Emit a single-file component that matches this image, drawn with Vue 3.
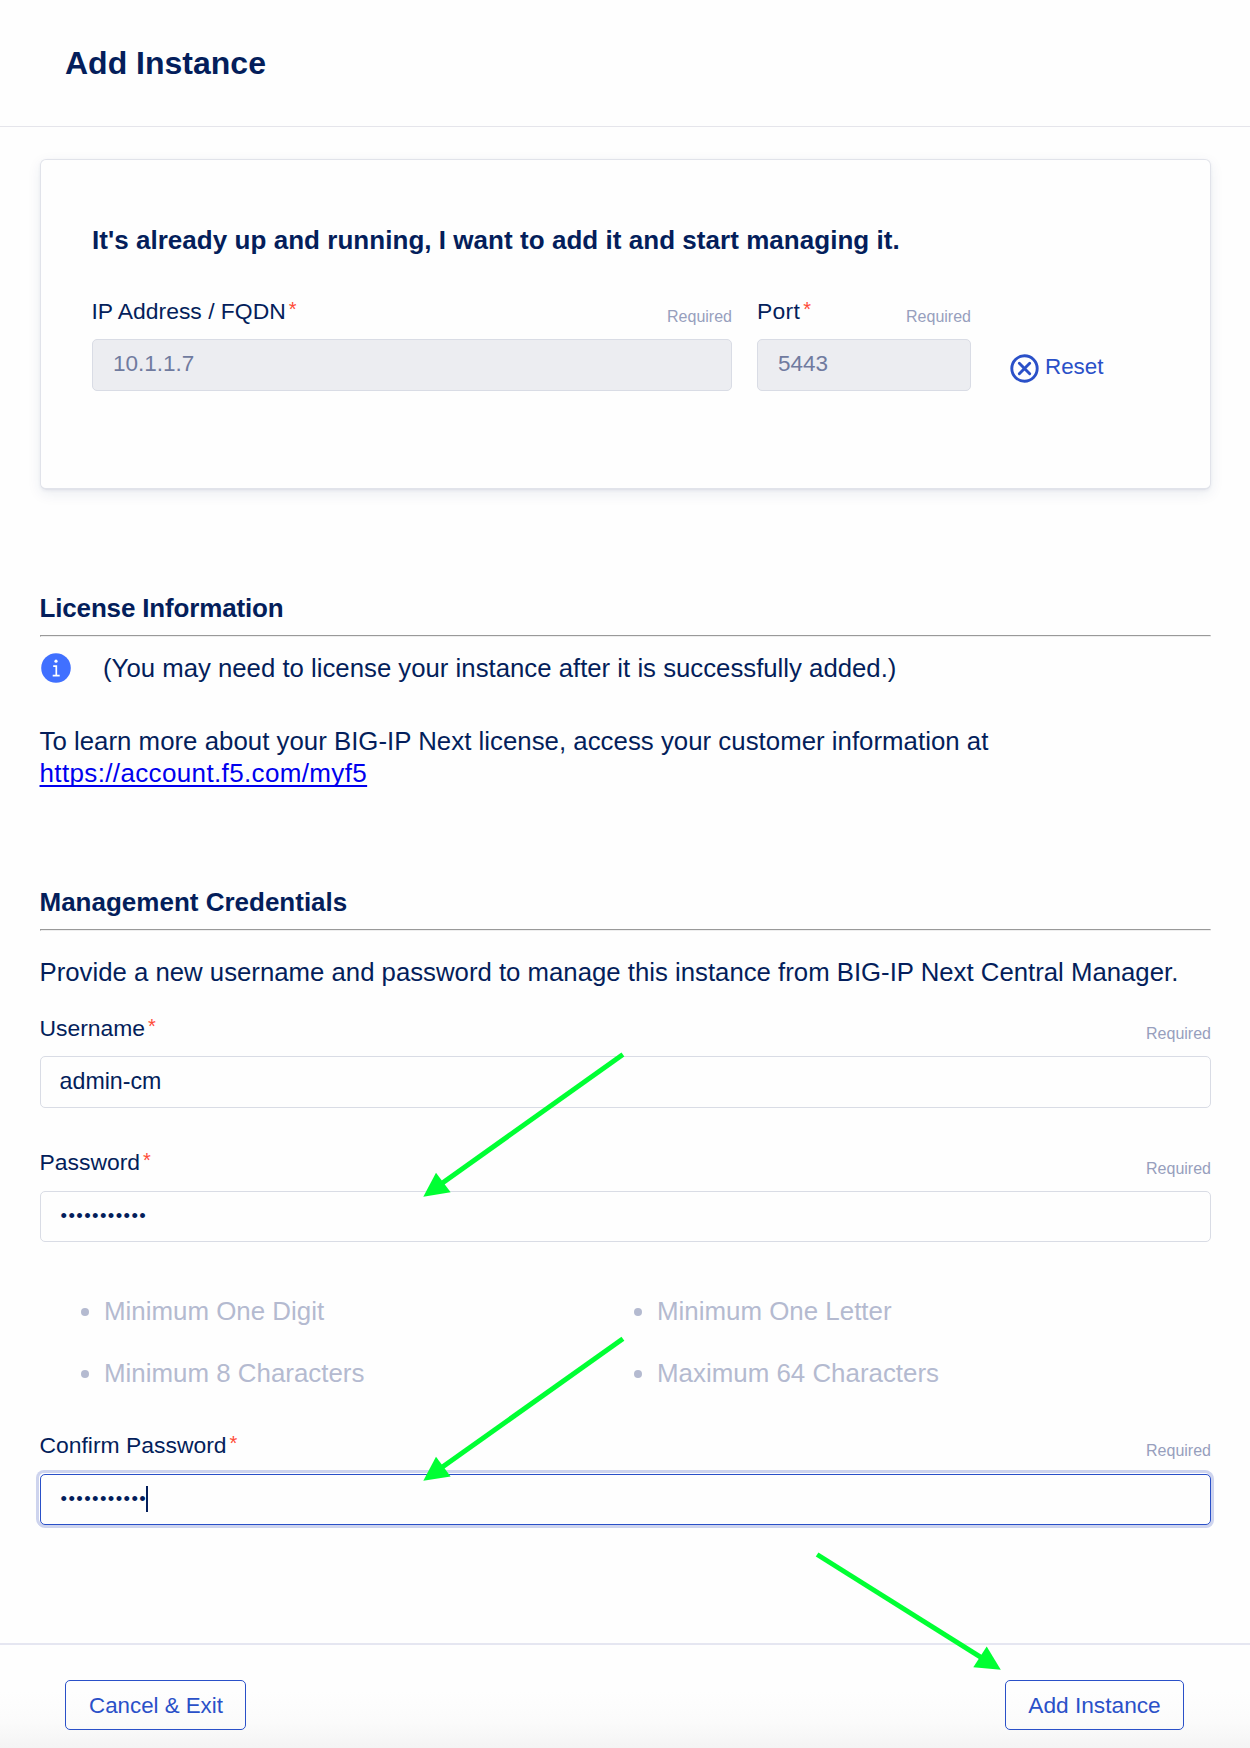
<script setup>
const rules = ['Minimum One Digit', 'Minimum One Letter', 'Minimum 8 Characters', 'Maximum 64 Characters']
const arrows = [
  { x1: 622.9, y1: 1054.5, x2: 441, y2: 1184, head: '423.3,1196.8 436,1172.8 450.6,1192.3' },
  { x1: 622.9, y1: 1338.7, x2: 441, y2: 1468, head: '423.3,1480.8 436,1456.8 450.6,1476.5' },
  { x1: 817.1, y1: 1554.5, x2: 983, y2: 1658.6, head: '1000.8,1669.8 986.7,1646.6 973.3,1667.2' },
]
const masked = '•'.repeat(11)
</script>

<template>
  <div class="page">
    <header class="header"><h1>Add Instance</h1></header>

    <main class="main">
      <section class="card">
        <h2 class="card-title">It's already up and running, I want to add it and start managing it.</h2>
        <div class="address">
          <div class="field host">
            <div class="label-row">
              <label>IP Address / FQDN<span class="star">*</span></label>
              <span class="required">Required</span>
            </div>
            <div class="input disabled">10.1.1.7</div>
          </div>
          <div class="field port">
            <div class="label-row">
              <label class="port-label">Port<span class="star">*</span></label>
              <span class="required">Required</span>
            </div>
            <div class="input disabled">5443</div>
          </div>
          <button class="reset">
            <svg width="29" height="29" viewBox="0 0 29 29">
              <circle cx="14.5" cy="14.5" r="12.7" fill="none" stroke="#2a50c8" stroke-width="2.9" />
              <path d="M9.3 9.3 L19.7 19.7 M19.7 9.3 L9.3 19.7" stroke="#2a50c8" stroke-width="2.9" stroke-linecap="round" />
            </svg>
            <span>Reset</span>
          </button>
        </div>
      </section>

      <section class="license">
        <h2 class="tight">License Information</h2>
        <hr />
        <div class="note">
          <svg width="30" height="30" viewBox="0 0 30 30">
            <circle cx="15" cy="15" r="14.8" fill="#4070ff" />
            <circle cx="15" cy="8.2" r="1.6" fill="#fff" />
            <path d="M12.2 13.2 H15.3 V22.4 M11.7 22.6 H18.7" fill="none" stroke="#fff" stroke-width="1.7" />
          </svg>
          <span>(You may need to license your instance after it is successfully added.)</span>
        </div>
        <p class="learn">
          To learn more about your BIG-IP Next license, access your customer information at<br />
          <a href="#">https://account.f5.com/myf5</a>
        </p>
      </section>

      <section class="credentials">
        <h2>Management Credentials</h2>
        <hr />
        <p class="intro">Provide a new username and password to manage this instance from BIG-IP Next Central Manager.</p>

        <div class="field username">
          <div class="label-row">
            <label>Username<span class="star">*</span></label>
            <span class="required">Required</span>
          </div>
          <div class="input value">admin-cm</div>
        </div>

        <div class="field password">
          <div class="label-row">
            <label>Password<span class="star">*</span></label>
            <span class="required">Required</span>
          </div>
          <div class="input"><span class="dots">{{ masked }}</span></div>
        </div>

        <ul class="rules">
          <li v-for="rule in rules" :key="rule">{{ rule }}</li>
        </ul>

        <div class="field confirm">
          <div class="label-row">
            <label>Confirm Password<span class="star">*</span></label>
            <span class="required">Required</span>
          </div>
          <div class="input focused"><span class="dots">{{ masked }}</span><i class="caret"></i></div>
        </div>
      </section>
    </main>

    <footer class="footer">
      <button class="btn cancel">Cancel &amp; Exit</button>
      <button class="btn add">Add Instance</button>
    </footer>

    <svg class="arrows" width="1250" height="1748" viewBox="0 0 1250 1748">
      <g v-for="(a, i) in arrows" :key="i">
        <line :x1="a.x1" :y1="a.y1" :x2="a.x2" :y2="a.y2" stroke="#00ff33" stroke-width="5" />
        <polygon :points="a.head" fill="#00ff33" />
      </g>
    </svg>
  </div>
</template>

<style>
body {
  margin: 0;
  background: #fefefe;
}
</style>

<style scoped>
.page {
  position: relative;
  display: flex;
  flex-direction: column;
  box-sizing: border-box;
  width: 1250px;
  height: 1748px;
  overflow: hidden;
  background: #fefefe;
  color: #041e5b;
  font-family: "Liberation Sans", Arial, sans-serif;
  font-size: 25.8px;
  line-height: 32px;
}
h1, h2, p, ul { margin: 0; padding: 0; font-kerning: normal; }
button { padding: 0; font: inherit; background: none; border: 0; color: #2a50c8; white-space: nowrap; }

.header {
  box-sizing: border-box;
  height: 127px;
  padding: 43px 65px 0;
  border-bottom: 1px solid #e5e5eb;
}
h1 { font-size: 32px; line-height: 40px; letter-spacing: 0; }
h2 { font-size: 26px; line-height: 32px; white-space: nowrap; margin-left: -0.5px; }
.tight { letter-spacing: -0.16px; }

.main { padding: 32px 39px 0 40px; }

.card {
  box-sizing: border-box;
  height: 331px;
  padding: 64px 0 0 51px;
  border: 1px solid #e1e3ea;
  border-bottom-width: 2px;
  border-radius: 6px;
  box-shadow: 0 4px 14px rgba(30, 50, 100, 0.08), 0 1px 3px rgba(30, 50, 100, 0.06);
}
.card-title { margin-left: 0; letter-spacing: 0.04px; }
.address { display: flex; align-items: flex-end; margin-top: 41px; }
.host { width: 640px; margin-right: 25px; }
.port { width: 214px; margin-right: 39px; }
label.port-label { margin-left: 0; letter-spacing: 0.3px; }

.label-row { display: flex; justify-content: space-between; align-items: flex-end; height: 30px; margin-bottom: 12px; }
label { align-self: flex-start; margin-left: -0.5px; font-size: 22.9px; line-height: 28px; white-space: nowrap; }
.star { margin-left: 3px; color: #ff4b38; font-size: 20px; line-height: 1; position: relative; top: -3px; letter-spacing: 0; }
.required { color: #979fbd; font-size: 16px; line-height: 20px; }

.input {
  display: flex;
  align-items: center;
  box-sizing: border-box;
  height: 52px;
  padding: 0 19px 2px 20px;
  border: 1px solid #d9dce5;
  border-radius: 5px;
  font-size: 22.5px;
  line-height: 28px;
}
.disabled { background: #ecedf1; color: #707b9f; }
.value { font-size: 23.2px; padding-left: 18.6px; }

.reset { display: flex; align-items: center; gap: 6px; height: 50px; font-size: 22.4px; }
.reset svg { margin-top: 4px; }
.reset span { margin-top: 2px; }

.license { margin-top: 102px; }
hr {
  height: 0;
  margin: 11px 0 0;
  border: 1px solid;
  border-color: #999 #eee #eee #999;
}
.note { display: flex; align-items: center; gap: 32px; height: 32px; margin: 15px 0 0 1px; white-space: nowrap; font-size: 25.75px; }
.learn { margin-top: 41px; margin-left: -0.5px; white-space: nowrap; letter-spacing: 0.02px; }
.learn a {
  color: #0000ee;
  font-size: 26px;
  letter-spacing: 0.36px;
  text-decoration-thickness: 2px;
  text-underline-offset: 3px;
  text-decoration-skip-ink: none;
}

.credentials { margin-top: 97px; }
.intro { margin: 25px 0 0 -0.5px; white-space: nowrap; font-size: 25.75px; }
.username { margin-top: 26px; }
.password { margin-top: 40px; }
.confirm { margin-top: 42px; }
.password .label-row, .confirm .label-row { height: 31px; }
.confirm .required { margin-bottom: 1px; }
.password .input, .confirm .input { height: 51px; padding-left: 19.5px; padding-bottom: 1px; }
.dots { font-size: 18.5px; letter-spacing: 1.4px; }
.focused {
  border-color: #2a50c8;
  box-shadow: -1px -1px 0 0 #fff, 0 0 0 3px #ced4ee, -1px -1px 0 3px #ced4ee;
}
.caret { width: 2px; height: 26px; margin-left: -1.5px; background: #041e5b; }

.rules {
  display: grid;
  grid-template-columns: 553px 1fr;
  row-gap: 30px;
  margin: 53px 0 0 44px;
  list-style: none;
  color: #b4bad0;
  font-size: 25.9px;
}
.rules li { display: flex; align-items: center; white-space: nowrap; }
.rules li::before { content: ""; width: 8px; height: 8px; margin: 2px 15px 0 -3px; border-radius: 50%; background: #b4bad0; }

.footer {
  display: flex;
  justify-content: space-between;
  box-sizing: border-box;
  height: 105px;
  margin-top: 118px;
  padding: 35px 66px 0 65px;
  border-top: 2px solid #e5e6f1;
  background: linear-gradient(#fefefe 45%, #fbfbfb 75%, #f4f4f4);
}
.btn {
  box-sizing: border-box;
  height: 50px;
  border: 1px solid #2a50c8;
  border-radius: 5px;
  background: transparent;
  font-size: 22.3px;
}
.cancel { width: 181px; padding: 1px 0 0 1px; }
.add { width: 179px; font-size: 22.7px; }

.arrows { position: absolute; left: 0; top: 0; pointer-events: none; }
</style>
